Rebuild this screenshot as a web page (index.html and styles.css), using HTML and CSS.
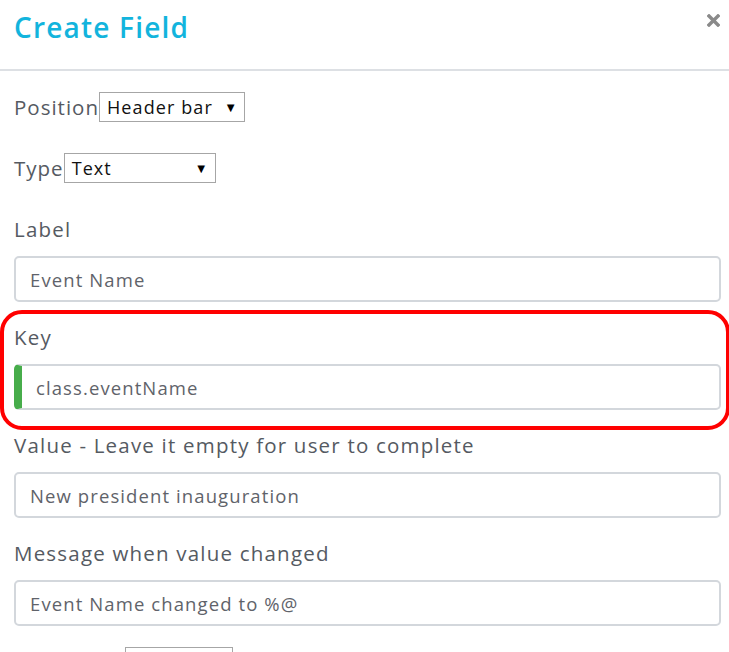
FILE: index.html
```html
<!DOCTYPE html>
<html lang="en">
<head>
<meta charset="utf-8">
<title>Create Field</title>
<link rel="stylesheet" href="styles.css">
</head>
<body>
<div class="modal">
  <header class="modal-header">
    <h1 class="modal-title">Create Field</h1>
    <button class="close-btn" aria-label="Close">
      <svg width="13" height="13" viewBox="0 0 13 13"><path d="M2 2 L11 11 M11 2 L2 11" stroke="#8a8a8a" stroke-width="3.4" stroke-linecap="square"/></svg>
    </button>
  </header>
  <div class="modal-body">
    <div class="inline-row">
      <span class="inline-label">Position</span>
      <div class="select select-position"><span>Header bar</span><span class="arrow">&#9660;</span></div>
    </div>
    <div class="inline-row row-type">
      <span class="inline-label">Type</span>
      <div class="select select-type"><span>Text</span><span class="arrow">&#9660;</span></div>
    </div>
    <div class="field field-first">
      <div class="field-label">Label</div>
      <div class="input">Event Name</div>
    </div>
    <div class="field field-highlight">
      <div class="field-label">Key</div>
      <div class="input input-valid">class.eventName</div>
      <span class="annotation"></span>
    </div>
    <div class="field">
      <div class="field-label">Value - Leave it empty for user to complete</div>
      <div class="input">New president inauguration</div>
    </div>
    <div class="field">
      <div class="field-label">Message when value changed</div>
      <div class="input">Event Name changed to %@</div>
    </div>
    <div class="inline-row row-last">
      <span class="inline-label label-spacer"></span>
      <div class="select select-last"></div>
    </div>
  </div>
</div>
</body>
</html>
```
FILE: styles.css
```css
html, body {
  margin: 0;
  padding: 0;
  background: #ffffff;
  overflow: hidden;
}
body {
  font-family: "Open Sans", "Liberation Sans", sans-serif;
  color: #555a62;
}
.modal {
  width: 729px;
  height: 652px;
  overflow: hidden;
}
.modal-header {
  height: 69px;
  border-bottom: 2px solid #dde0e4;
  display: flex;
  justify-content: space-between;
  align-items: flex-start;
}
.modal-title {
  margin: 10px 0 0 14px;
  font-size: 28px;
  line-height: 34px;
  font-weight: 600;
  color: #12b4dd;
  letter-spacing: 1.2px;
}
.close-btn {
  margin: 14px 9px 0 0;
  padding: 0;
  border: 0;
  background: none;
  width: 13px;
  height: 13px;
  display: block;
}
.close-btn svg { display: block; }
.modal-body {
  padding: 0 8px 0 14px;
}
.inline-row {
  display: flex;
  align-items: center;
  margin-top: 21px;
  height: 30px;
}
.row-type { margin-top: 31px; }
.row-last { margin-top: 21px; align-items: flex-start; }
.inline-label {
  font-size: 20.5px;
  line-height: 30px;
  letter-spacing: 1px;
  color: #555a62;
}
.label-spacer { width: 111px; }
.select {
  box-sizing: border-box;
  height: 30px;
  border: 1px solid #a6a6a6;
  background: #fff;
  display: flex;
  align-items: center;
  justify-content: space-between;
  padding: 0 7px 0 7px;
  font-size: 18px;
  letter-spacing: 1.1px;
  color: #111;
}
.select-position { width: 146px; }
.select-type { width: 152px; }
.select-last { width: 108px; }
.arrow {
  font-size: 13px;
  letter-spacing: 0;
  color: #000;
}
.field {
  position: relative;
  margin-top: 20px;
}
.field-first { margin-top: 31px; }
.field-label {
  font-size: 20.5px;
  line-height: 30px;
  letter-spacing: 1.2px;
  margin-bottom: 12px;
  color: #555a62;
}
.input {
  box-sizing: border-box;
  height: 46px;
  border: 2px solid #d3d7dc;
  border-radius: 5px;
  padding: 0 14px;
  display: flex;
  align-items: center;
  font-size: 18.5px;
  letter-spacing: 1.1px;
  color: #5f636a;
}
.input-valid {
  border-left: 8px solid #47ad4b;
}
.annotation {
  position: absolute;
  left: -14px;
  top: -12px;
  bottom: -20px;
  width: 722px;
  border: 4px solid #ff0000;
  border-radius: 22px;
  pointer-events: none;
}
```
